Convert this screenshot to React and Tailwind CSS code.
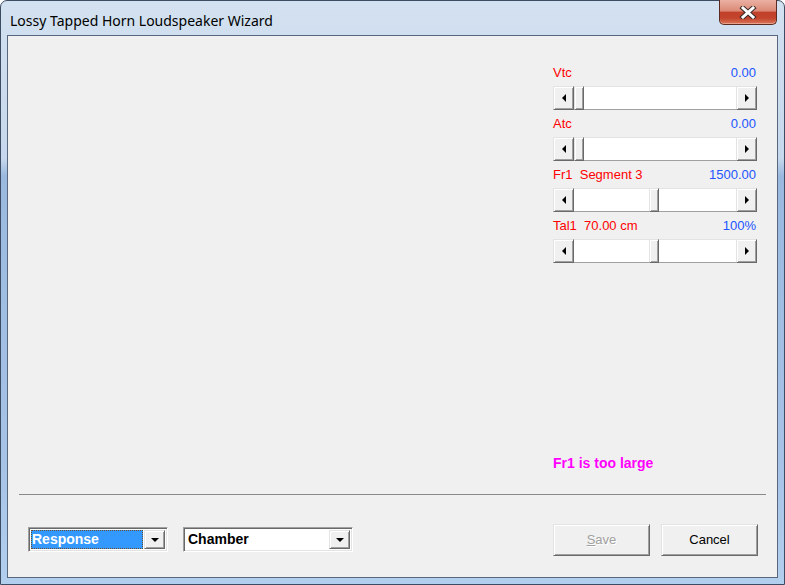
import React from "react";

const sliders = [
    {label: "Vtc", value: "0.00", pos: "left"},
    {label: "Atc", value: "0.00", pos: "left"},
    {label: "Fr1  Segment 3", value: "1500.00", pos: "mid"},
    {label: "Tal1  70.00 cm", value: "100%", pos: "mid"},
];

const raised = "bg-[#f0f0f0] border border-[#696969] border-t-[#e3e3e3] border-l-[#e3e3e3] shadow-[inset_1px_1px_0_#ffffff,inset_-1px_-1px_0_#a0a0a0]";
const sunken = "border border-[#ffffff] border-t-[#a0a0a0] border-l-[#a0a0a0] shadow-[inset_1px_1px_0_#696969,inset_-1px_-1px_0_#e3e3e3]";

const Arrow = ({dir}) =>
{
    const points = {
        left: "4,0 4,8 0,4",
        right: "0,0 0,8 4,4",
        down: "0,0 8,0 4,4",
    };
    const size = dir === "down" ? {w: 8, h: 4} : {w: 4, h: 8};
    return (
        <svg width={size.w} height={size.h} viewBox={`0 0 ${size.w} ${size.h}`}>
            <polygon points={points[dir]} fill="#000" />
        </svg>
    );
};

const ScrollBar = ({pos}) => (
    <div className="flex h-[24px] w-full">
        <div className={`${raised} w-[21px] h-full flex items-center justify-center`}>
            <Arrow dir="left" />
        </div>
        <div className="flex-1 flex bg-white border-t border-b border-t-[#e3e3e3] border-b-[#a0a0a0]">
            {pos === "mid" && <div className="w-[75px]" />}
            <div className={`${raised} w-[10px] h-[24px] -mt-px`} />
        </div>
        <div className={`${raised} w-[21px] h-full flex items-center justify-center`}>
            <Arrow dir="right" />
        </div>
    </div>
);

const Combo = ({text, selected, width}) => (
    <div className={`${sunken} ${width} h-[25px] mt-[3px] bg-white flex items-stretch p-[2px]`}>
        <div className="flex-1 flex items-center pr-[1px]">
            {selected ? (
                <div className="w-full h-[19px] bg-[#3399ff] border border-dotted border-[#6b4a2a] flex items-center text-white font-bold text-[14px]">
                    {text}
                </div>
            ) : (
                <div className="pl-[2px] text-black font-bold text-[14px]">{text}</div>
            )}
        </div>
        <div className={`${raised} w-[21px] flex items-center justify-center`}>
            <Arrow dir="down" />
        </div>
    </div>
);

const CloseGlyph = () => (
    <svg width="18" height="13" viewBox="0 0 18 13">
        <path d="M4 2 L14 11 M14 2 L4 11" stroke="#3b2a2a" strokeWidth="5" strokeLinecap="square" />
        <path d="M4 2 L14 11 M14 2 L4 11" stroke="#ffffff" strokeWidth="3" strokeLinecap="square" />
    </svg>
);

export default function App()
{
    return (
        <div
            className="w-[785px] h-[585px] flex flex-col rounded-t-[7px] border border-[#3c4d63] bg-[linear-gradient(180deg,#d3e1f0_0%,#c6d8ec_27%,#9bb9df_30%,#a7c4e7_80%,#b3cfee_100%)] px-[6px] pb-[6px]"
            style={{fontFamily: "'Liberation Sans', Arial, sans-serif"}}
        >
            {/* title bar */}
            <div className="h-[34px] flex items-start shrink-0">
                <div className="pt-[9px] pl-[3px] text-[14px] text-black" style={{fontFamily: "'Noto Sans', 'Open Sans', sans-serif"}}>
                    Lossy Tapped Horn Loudspeaker Wizard
                </div>
                <div className="ml-auto mr-[1px] w-[58px] h-[25px] -mt-px rounded-b-[5px] border border-[#5b2a22] border-t-0 bg-[linear-gradient(180deg,#eab0a3_0%,#dc8a76_45%,#c2412a_52%,#c3432c_75%,#d9775a_100%)] shadow-[inset_0_-1px_0_#eaa08a] flex items-center justify-center">
                    <CloseGlyph />
                </div>
            </div>

            {/* client area */}
            <div className="flex-1 flex flex-col bg-[#f0f0f0] border border-[#56677e] text-[13px]">
                <div className="flex-1 flex justify-end pr-[20px] pt-[29px]">
                    <div className="w-[204px] flex flex-col">
                        {sliders.map((s) => (
                            <div key={s.label} className="flex flex-col mb-[6px]">
                                <div className="h-[16px] flex justify-between items-center mb-[5px] pr-[1px]">
                                    <span className="text-[#ff0000] whitespace-pre">{s.label}</span>
                                    <span className="text-[#2255ff]">{s.value}</span>
                                </div>
                                <ScrollBar pos={s.pos} />
                            </div>
                        ))}
                        <div className="mt-auto mb-[23px] h-[16px] flex items-center text-[#ff00ff] font-bold text-[14px]">
                            Fr1 is too large
                        </div>
                    </div>
                </div>

                <div className="h-px mx-[11px] bg-[#8a8a8a]" />

                <div className="h-[82px] shrink-0 flex items-start pt-[29px] pl-[20px] pr-[19px]">
                    <Combo text="Response" selected width="w-[140px]" />
                    <div className="ml-[15px]">
                        <Combo text="Chamber" width="w-[170px]" />
                    </div>
                    <button className={`${raised} ml-auto w-[97px] h-[32px] text-[13px] text-[#a0a0a0] [text-shadow:1px_1px_0_#ffffff]`}>
                        <span className="underline">S</span>ave
                    </button>
                    <button className={`${raised} ml-[11px] w-[97px] h-[32px] text-[13px] text-black`}>
                        Cancel
                    </button>
                </div>
            </div>
        </div>
    );
}
